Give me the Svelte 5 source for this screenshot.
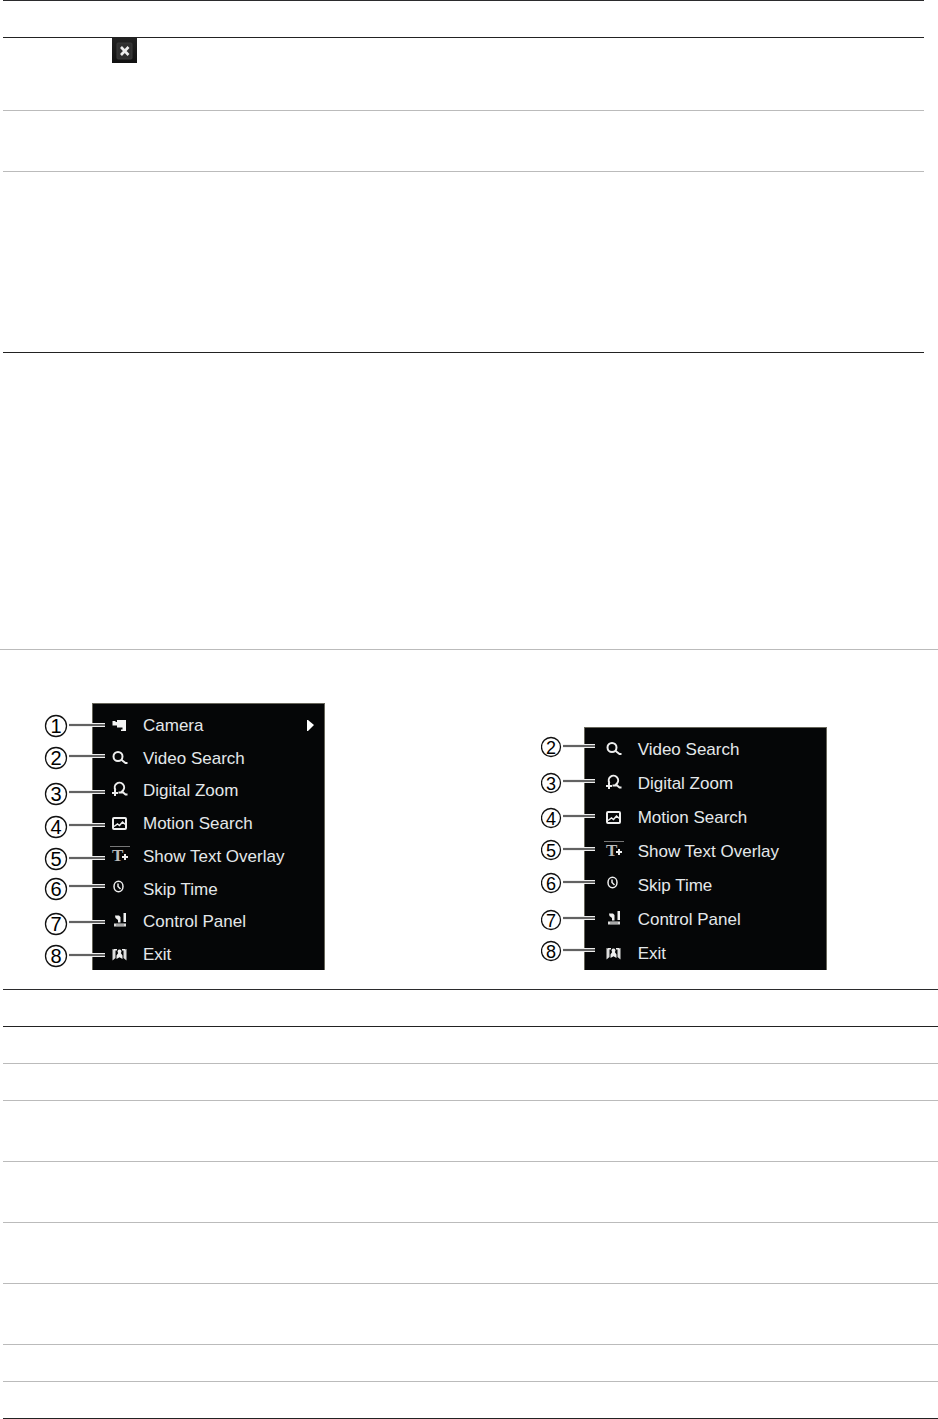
<!-- App.svelte -->
<script>
  const menuItems = [
    { id: 'camera', name: 'Camera', submenu: true },
    { id: 'search', name: 'Video Search' },
    { id: 'zoom', name: 'Digital Zoom' },
    { id: 'motion', name: 'Motion Search' },
    { id: 'text', name: 'Show Text Overlay' },
    { id: 'skip', name: 'Skip Time' },
    { id: 'panel', name: 'Control Panel' },
    { id: 'exit', name: 'Exit' }
  ];

  // Callouts: number, circle centre and leader line height
  const figures = [
    {
      id: 'full',
      items: menuItems,
      height: 267,
      cx: 12,
      r: 10.5,
      size: 20,
      lineStart: 25,
      lineEnd: 61,
      callouts: [
        { n: 1, y: 23, line: 22 },
        { n: 2, y: 55, line: 53 },
        { n: 3, y: 91, line: 89 },
        { n: 4, y: 124, line: 122 },
        { n: 5, y: 156, line: 155 },
        { n: 6, y: 186, line: 183 },
        { n: 7, y: 221, line: 219 },
        { n: 8, y: 253, line: 252 }
      ]
    },
    {
      id: 'short',
      items: menuItems.slice(1),
      height: 243,
      cx: 10,
      r: 9.5,
      size: 18,
      lineStart: 22,
      lineEnd: 54,
      callouts: [
        { n: 2, y: 20, line: 19 },
        { n: 3, y: 56, line: 54 },
        { n: 4, y: 91, line: 89 },
        { n: 5, y: 123, line: 122 },
        { n: 6, y: 156, line: 155 },
        { n: 7, y: 193, line: 191 },
        { n: 8, y: 224, line: 223 }
      ]
    }
  ];

  const upperRows = ['medium', 'small', 'large'];
  const lowerRows = ['line', 'line', 'small', 'small', 'small', 'small', 'line', 'line'];
</script>

{#snippet icon(id)}
  <svg class="icon" viewBox="0 0 20 20" aria-hidden="true">
    {#if id === 'camera'}
      <path d="M2.500 5h3v1H7V4h9v11h-5v-1.500h1.500V11.500H7V9.500H2.500z" fill="#f4f4f4" />
    {:else if id === 'search'}
      <circle cx="8" cy="7.500" r="4.500" class="stroke" />
      <path d="M11 10.500l4.500 3.500h2" class="stroke" />
    {:else if id === 'zoom'}
      <path d="M5.500 9A4.700 4.700 0 1 1 13 9.500l-1 1 3.500 3h2M8.500 11.500h4" class="stroke" />
      <path d="M5 8.500v6.500M2 12h6" class="stroke" />
    {:else if id === 'motion'}
      <rect x="3" y="4" width="13" height="11" rx="1" class="stroke" />
      <path d="M4 12.500l3.500-2.500 2 1.500L12.500 8l3.500 3" class="stroke thin" />
    {:else if id === 'text'}
      <path d="M0 -.5h20" stroke="#777" fill="none" />
      <text x="2" y="14" class="letter">T</text>
      <path d="M15 7v6M12 10h6" class="stroke" />
    {:else if id === 'skip'}
      <ellipse cx="8.500" cy="6.500" rx="4.500" ry="5.200" class="stroke thin" />
      <path d="M8 3.500v3l2.500 2.500" class="stroke thin" />
    {:else if id === 'panel'}
      <path d="M4 11.500h12v3H4z" fill="#dcdcdc" />
      <path d="M13.500 1H16v9h-2.500zM5 3.500h4l1.500 1.500v5.500H8V8L5.500 6z" fill="#f0f0f0" />
      <path d="M6 13h8" stroke="#777" fill="none" />
    {:else}
      <path d="M2.500 4l3 1v8l-3 2.500zM16.500 4l-3 1v8l3 2.500z" fill="#ddd" />
      <path d="M4 4.700h3M12 4.700h3" class="stroke thin" />
      <path d="M9.500 4.500a2 2 0 0 1 1.300 3.500l1.700 2.500V14l-3-1.700-3 1.700v-3.500L8.200 8a2 2 0 0 1 1.300-3.500z" fill="#f0f0f0" />
    {/if}
  </svg>
{/snippet}

<main>
  <table class="upper">
    <thead>
      <tr><th></th></tr>
    </thead>
    <tbody>
      {#each upperRows as size, i}
        <tr>
          <td class={size}>
            {#if i === 0}
              <button class="close" aria-label="Close">
                <svg viewBox="0 0 25 25" aria-hidden="true">
                  <rect x="5" y="5" width="15" height="16" rx="1" fill="#303030" stroke="#3b3b3b" />
                  <path d="M9 9l7.500 8M16.500 9L9 17" stroke="#eee" stroke-width="2.600" />
                </svg>
              </button>
            {/if}
          </td>
        </tr>
      {/each}
    </tbody>
  </table>

  <hr />

  <section class="figures">
    {#each figures as figure}
      <figure class={figure.id}>
        <div class="menu">
          {#each figure.items as item}
            <button class="item">
              {@render icon(item.id)}
              <span>{item.name}</span>
              {#if item.submenu}
                <svg class="arrow" viewBox="0 0 7 12" aria-hidden="true">
                  <path d="M0 0h1l6 5-6 6H0z" fill="#fff" />
                </svg>
              {/if}
            </button>
          {/each}
        </div>
        <svg class="callouts" width="64" height={figure.height}>
          {#each figure.callouts as c}
            <path d="M{figure.lineStart} {c.line}H{figure.lineEnd}" stroke="#eee" stroke-width="4" />
            <path d="M{figure.lineStart} {c.line}H{figure.lineEnd}" stroke="#333" stroke-width="1.500" />
            <circle cx={figure.cx} cy={c.y} r={figure.r} fill="#fff" stroke="#111" stroke-width="1.300" />
            <text x={figure.cx} y={c.y + 7} font-size={figure.size} text-anchor="middle">{c.n}</text>
          {/each}
        </svg>
      </figure>
    {/each}
  </section>

  <table class="lower">
    <thead>
      <tr><th></th></tr>
    </thead>
    <tbody>
      {#each lowerRows as size}
        <tr><td class={size}></td></tr>
      {/each}
    </tbody>
  </table>
</main>

<style>
  :global(body) {
    margin: 0;
    background: #fff;
  }

  main {
    font-family: "Liberation Sans", Arial, sans-serif;
    color: #111;
  }

  table {
    border-collapse: separate;
    border-spacing: 0;
    border-top: 1px solid #2b2b2d;
  }

  .upper {
    width: calc(100% - 17px);
    margin-left: 3px;
  }

  .lower {
    width: calc(100% - 3px);
    margin: 19px 0 0 3px;
  }

  th,
  td {
    box-sizing: border-box;
    height: 37px;
    padding: 0;
    vertical-align: top;
    border-bottom: 1px solid #bbb;
  }

  th,
  tr:last-child td {
    border-bottom-color: #222;
  }

  .small {
    height: 61px;
  }

  .medium {
    height: 73px;
  }

  .large {
    height: 181px;
  }

  .close {
    display: block;
    width: 25px;
    height: 25px;
    margin-left: 109px;
    padding: 0;
    border: 0;
    background: linear-gradient(#222, #111);
  }

  .close svg {
    display: block;
  }

  hr {
    margin: 296px 0 0;
    border: 0;
    border-top: 1px solid #bbb;
  }

  .figures {
    display: grid;
    grid-template-columns: 5fr 4fr;
    align-items: end;
    margin-top: 53px;
    padding-left: 44px;
  }

  figure {
    position: relative;
    margin: 0;
    padding-left: 48px;
  }

  .short {
    padding-left: 43px;
  }

  .menu {
    box-sizing: border-box;
    display: flex;
    flex-direction: column;
    justify-content: space-between;
    width: 233px;
    min-height: 267px;
    padding: 10px 10px 3px 17px;
    background: #050607;
    border: 1px solid #66655a;
    border-bottom: 0;
  }

  .short .menu {
    width: 243px;
    min-height: 243px;
    padding: 10px 10px 4px 19px;
  }

  .item {
    display: flex;
    align-items: center;
    gap: 13px;
    height: 24px;
    padding: 0;
    border: 0;
    background: none;
    color: #e4e8ea;
    font-family: inherit;
    font-size: 17px;
    line-height: 24px;
    text-align: left;
    cursor: pointer;
  }

  .short .item {
    gap: 14px;
  }

  .icon {
    flex: none;
    width: 20px;
    height: 20px;
    overflow: visible;
  }

  .arrow {
    width: 7px;
    height: 12px;
    margin-left: auto;
  }

  .stroke {
    fill: none;
    stroke: #eee;
    stroke-width: 2;
  }

  .thin {
    stroke-width: 1.5;
  }

  .letter {
    fill: #bbb;
    font-family: "Liberation Serif", serif;
    font-size: 17px;
    font-weight: bold;
  }

  .callouts {
    position: absolute;
    left: 0;
    bottom: 0;
  }
</style>
